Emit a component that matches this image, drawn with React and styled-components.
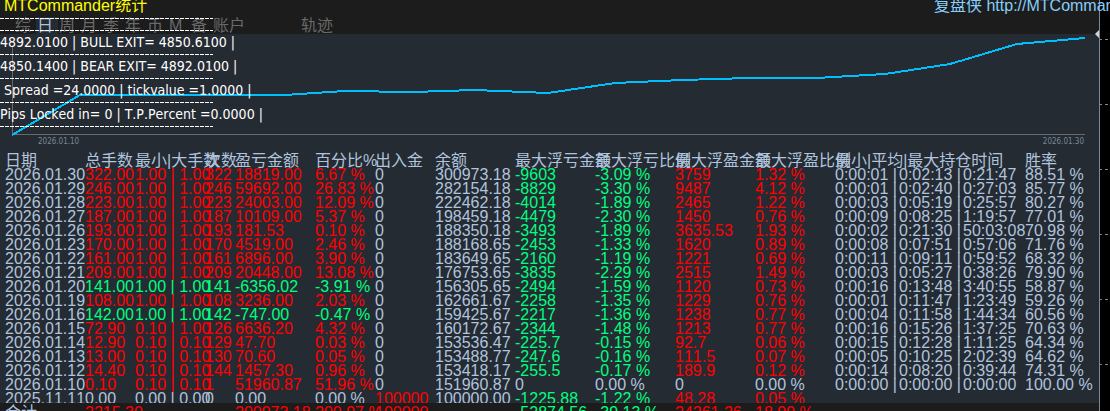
import React from 'react';
import styled, { createGlobalStyle } from 'styled-components';

const tabs = ['综', '日', '周', '月', '季', '年', '币', 'M', '备'];

const columns = [
  { label: '日期', width: 80 },
  { label: '总手数', width: 50 },
  { label: '最小|大手数', width: 70 },
  { label: '次数', width: 30 },
  { label: '盈亏金额', width: 80 },
  { label: '百分比%', width: 60 },
  { label: '出入金', width: 60 },
  { label: '余额', width: 80 },
  { label: '最大浮亏金额', width: 80 },
  { label: '最大浮亏比例', width: 80 },
  { label: '最大浮盈金额', width: 80 },
  { label: '最大浮盈比例', width: 80 },
  { label: '最小|平均|最大持仓时间', width: 190 },
  { label: '胜率' },
];

const days = [
  ['2026.01.30', '322.00', '1.00 | 1.00', '322', '18819.00', '6.67 %', '0', '300973.18', '-9603', '-3.09 %', '3759', '1.32 %', '0:00:01 | 0:02:13 | 0:21:47', '88.51 %'],
  ['2026.01.29', '246.00', '1.00 | 1.00', '246', '59692.00', '26.83 %', '0', '282154.18', '-8829', '-3.30 %', '9487', '4.12 %', '0:00:01 | 0:02:40 | 0:27:03', '85.77 %'],
  ['2026.01.28', '223.00', '1.00 | 1.00', '223', '24003.00', '12.09 %', '0', '222462.18', '-4014', '-1.89 %', '2465', '1.22 %', '0:00:03 | 0:05:19 | 0:25:57', '80.27 %'],
  ['2026.01.27', '187.00', '1.00 | 1.00', '187', '10109.00', '5.37 %', '0', '198459.18', '-4479', '-2.30 %', '1450', '0.76 %', '0:00:09 | 0:08:25 | 1:19:57', '77.01 %'],
  ['2026.01.26', '193.00', '1.00 | 1.00', '193', '181.53', '0.10 %', '0', '188350.18', '-3493', '-1.89 %', '3635.53', '1.93 %', '0:00:02 | 0:21:30 | 50:03:08', '70.98 %'],
  ['2026.01.23', '170.00', '1.00 | 1.00', '170', '4519.00', '2.46 %', '0', '188168.65', '-2453', '-1.33 %', '1620', '0.89 %', '0:00:08 | 0:07:51 | 0:57:06', '71.76 %'],
  ['2026.01.22', '161.00', '1.00 | 1.00', '161', '6896.00', '3.90 %', '0', '183649.65', '-2160', '-1.19 %', '1221', '0.69 %', '0:00:11 | 0:09:11 | 0:59:52', '68.32 %'],
  ['2026.01.21', '209.00', '1.00 | 1.00', '209', '20448.00', '13.08 %', '0', '176753.65', '-3835', '-2.29 %', '2515', '1.49 %', '0:00:03 | 0:05:27 | 0:38:26', '79.90 %'],
  ['2026.01.20', '141.00', '1.00 | 1.00', '141', '-6356.02', '-3.91 %', '0', '156305.65', '-2494', '-1.59 %', '1120', '0.73 %', '0:00:16 | 0:13:48 | 3:40:55', '58.87 %'],
  ['2026.01.19', '108.00', '1.00 | 1.00', '108', '3236.00', '2.03 %', '0', '162661.67', '-2258', '-1.35 %', '1229', '0.76 %', '0:00:01 | 0:11:47 | 1:23:49', '59.26 %'],
  ['2026.01.16', '142.00', '1.00 | 1.00', '142', '-747.00', '-0.47 %', '0', '159425.67', '-2217', '-1.36 %', '1238', '0.77 %', '0:00:04 | 0:11:58 | 1:44:34', '60.56 %'],
  ['2026.01.15', '72.90', '0.10 | 1.00', '126', '6636.20', '4.32 %', '0', '160172.67', '-2344', '-1.48 %', '1213', '0.77 %', '0:00:16 | 0:15:26 | 1:37:25', '70.63 %'],
  ['2026.01.14', '12.90', '0.10 | 0.10', '129', '47.70', '0.03 %', '0', '153536.47', '-225.7', '-0.15 %', '92.7', '0.06 %', '0:00:15 | 0:12:28 | 1:11:25', '64.34 %'],
  ['2026.01.13', '13.00', '0.10 | 0.10', '130', '70.60', '0.05 %', '0', '153488.77', '-247.6', '-0.16 %', '111.5', '0.07 %', '0:00:05 | 0:10:25 | 2:02:39', '64.62 %'],
  ['2026.01.12', '14.40', '0.10 | 0.10', '144', '1457.30', '0.96 %', '0', '153418.17', '-255.5', '-0.17 %', '189.9', '0.12 %', '0:00:14 | 0:08:20 | 0:39:44', '74.31 %'],
  ['2026.01.10', '0.10', '0.10 | 0.10', '1', '51960.87', '51.96 %', '0', '151960.87', '0', '0.00 %', '0', '0.00 %', '0:00:00 | 0:00:00 | 0:00:00', '100.00 %'],
  ['2025.11.11', '0.00', '0.00 | 0.00', '0', '0.00', '0.00 %', '100000', '100000.00', '-1225.88', '-1.22 %', '48.28', '0.05 %', '', ''],
];

const total = ['合计', '2215.30', '', '', '200973.18', '200.97 %', '100000', '', '-52874.56', '-39.13 %', '24261.26', '18.99 %', '', ''];

const equity = [
  [12, 101], [80, 61], [284, 61], [345, 57], [412, 58], [475, 56], [548, 59],
  [615, 49], [682, 46], [749, 44], [816, 44], [885, 40], [950, 30], [1017, 10], [1085, 4],
];

const comments = [
  '4892.0100 | BULL EXIT= 4850.6100 |',
  '4850.1400 | BEAR EXIT= 4892.0100 |',
  'Spread =24.0000 | tickvalue =1.0000 |',
  'Pips Locked in= 0 | T.P.Percent =0.0000 |',
];

const HOLD_TIME = 12;

const signOf = (text) => {
  const value = parseFloat(text);
  if (value > 0) return 'gain';
  return value < 0 ? 'loss' : 'flat';
};

// lots, trade count and profit share the sign of the day's result
const toneOf = (row, i) => {
  if (i >= 1 && i <= 5) return signOf(row[4]);
  if (i === 6 || (i >= 8 && i <= 11)) return signOf(row[i]);
  return 'flat';
};

const Columns = () => (
  <colgroup>
    {columns.map((column) => (
      <Col key={column.label} $width={column.width} />
    ))}
  </colgroup>
);

const HoldTimes = ({ value }) => {
  const times = value.split(' | ');
  return times.map((time, i) => (
    <HoldTime key={i}>{i < times.length - 1 ? `${time} |` : time}</HoldTime>
  ));
};

const Row = ({ cells }) => (
  <tr>
    {cells.map((cell, i) => (
      <Cell key={columns[i].label} $tone={toneOf(cells, i)}>
        {i === HOLD_TIME && cell ? <HoldTimes value={cell} /> : cell}
      </Cell>
    ))}
  </tr>
);

const App = () => {
  return (
    <>
      <GlobalStyle />
      <Screen>
        <Main>
          <Header>
            <Title>MTCommander统计</Title>
            <SiteLink href="#site">复盘侠 http://MTComman</SiteLink>
          </Header>
          <Tabs>
            {tabs.map((tab) => (
              <Tab key={tab} type="button" $active={tab === '日'}>{tab}</Tab>
            ))}
            <Tab type="button" $wide>账户</Tab>
            <Tab type="button">轨迹</Tab>
          </Tabs>
          <Panel>
            <Chart viewBox="0 0 1099 102" preserveAspectRatio="none">
              <path d="M12.5 11V100.5H1085" fill="none" stroke="#696969" shapeRendering="crispEdges" />
              <polyline
                points={equity.map((point) => point.join(',')).join(' ')}
                fill="none"
                stroke="#00bfff"
                strokeWidth="2"
                shapeRendering="crispEdges"
              />
            </Chart>
            <Dates>
              <span>2026.01.10</span>
              <span>2026.01.30</span>
            </Dates>
            <Table>
              <Columns />
              <thead>
                <tr>
                  {columns.map((column) => (
                    <HeadCell key={column.label} scope="col">{column.label}</HeadCell>
                  ))}
                </tr>
              </thead>
              <tbody>
                {days.map((day) => (
                  <Row key={day[0]} cells={day} />
                ))}
              </tbody>
            </Table>
          </Panel>
          <Footer>
            <Table>
              <Columns />
              <tbody>
                <Row cells={total} />
              </tbody>
            </Table>
          </Footer>
        </Main>
        <PriceAxis>
          {[0, 1, 2, 3, 4, 5].map((tick) => (
            <Tick key={tick} />
          ))}
          <Marker viewBox="0 0 4 8">
            <path d="M4 0V8L0 4Z" fill="#d3d3d3" />
          </Marker>
        </PriceAxis>
        <Comment>
          <Rule />
          {comments.map((line) => (
            <React.Fragment key={line}>
              <Rule />
              <CommentLine $indent={line.startsWith('Spread') ? 4 : 0}>{line}</CommentLine>
            </React.Fragment>
          ))}
          <Rule />
        </Comment>
      </Screen>
    </>
  );
};

const GlobalStyle = createGlobalStyle`
  * {
    box-sizing: border-box;
  }

  body {
    margin: 0;
    background: #000;
    color: #b0c4de;
    font-family: 'Liberation Sans', 'Noto Sans CJK SC', sans-serif;
    font-size: 16px;
    font-kerning: none;
    overflow: hidden;
  }
`;

const tones = {
  gain: '#ff0000',
  loss: '#00ff7f',
  flat: '#b0c4de',
};

const Screen = styled.div`
  position: relative;
  display: flex;
  height: 100vh;
  overflow: hidden;
`;

const Main = styled.main`
  position: relative;
  z-index: 1;
  flex: 1;
  min-width: 0;
  display: flex;
  flex-direction: column;
  background: #1c1c1c;
`;

const Header = styled.header`
  display: flex;
  justify-content: space-between;
  height: 17px;
  padding-left: 4px;
  line-height: 12px;
  white-space: nowrap;
`;

const Title = styled.h1`
  margin: 0;
  font-size: 16px;
  font-weight: 400;
  color: #ffff00;
`;

const SiteLink = styled.a`
  flex: 0 0 165px;
  min-width: 0;
  color: #87cefa;
  text-decoration: none;
`;

const Tabs = styled.nav`
  display: flex;
  height: 17px;
  padding-left: 14px;
`;

const Tab = styled.button`
  flex: 0 0 ${(props) => (props.$wide ? '88px' : 'auto')};
  min-width: 22px;
  padding: 0 1px;
  border: 0;
  background: ${(props) => (props.$active ? '#252b33' : 'transparent')};
  color: ${(props) => (props.$active ? '#b0c4de' : '#696969')};
  font: inherit;
  line-height: 17px;
  text-align: left;
  white-space: nowrap;
`;

const Panel = styled.section`
  flex: 1;
  min-height: 0;
  overflow: hidden;
  background: #252b33;
`;

const Chart = styled.svg`
  display: block;
  width: 100%;
  height: 102px;
`;

const Dates = styled.div`
  display: flex;
  justify-content: space-between;
  padding: 0 15px 6px 38px;
  color: #778899;
  font-family: 'DejaVu Sans Condensed', 'DejaVu Sans', sans-serif;
  font-size: 8px;
  line-height: 12px;
`;

const Table = styled.table`
  width: calc(100% - 5px);
  margin-left: 5px;
  border-collapse: collapse;
  table-layout: fixed;
  line-height: 14px;
  text-align: left;
  white-space: nowrap;
`;

const Col = styled.col`
  width: ${(props) => (props.$width ? `${props.$width}px` : 'auto')};
`;

const HeadCell = styled.th`
  height: 14px;
  padding: 0;
  font-weight: 400;
`;

const Cell = styled.td`
  height: 14px;
  padding: 0;
  color: ${(props) => tones[props.$tone]};
`;

const HoldTime = styled.span`
  display: inline-block;
  width: 64px;
  vertical-align: top;
`;

const Footer = styled.footer`
  height: 8px;
  padding-top: 3px;
  overflow: hidden;
`;

const PriceAxis = styled.aside`
  position: relative;
  display: flex;
  flex-direction: column;
  gap: 64px;
  width: 11px;
  padding-top: 39px;
  border-left: 1px solid #778899;
`;

const Tick = styled.span`
  flex: none;
  height: 1px;
  background: linear-gradient(90deg, #778899 2px, transparent 2px, transparent 5px, #778899 5px, #778899 8px, transparent 8px);
`;

const Marker = styled.svg`
  position: absolute;
  z-index: 2;
  top: 30px;
  right: 11px;
  width: 4px;
  height: 8px;
`;

const Comment = styled.div`
  position: absolute;
  z-index: 2;
  top: 12px;
  left: 0;
  color: #fff;
  font-family: 'DejaVu Sans Condensed', 'Noto Sans', sans-serif;
  font-size: 14px;
  line-height: 12px;
  white-space: nowrap;
  pointer-events: none;
`;

const CommentLine = styled.div`
  height: 12px;
  padding-left: ${(props) => props.$indent}px;
`;

const Rule = styled.hr`
  width: 213px;
  height: 12px;
  margin: 0;
  border: 0;
  background: repeating-linear-gradient(90deg, #fff 0 4px, transparent 4px 5px) 0 6px / 100% 1px no-repeat;
`;

export default App;
